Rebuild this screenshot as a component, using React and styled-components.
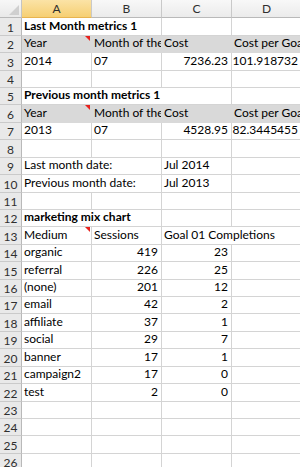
import React from "react";
import styled, { createGlobalStyle, css } from "styled-components";

const GlobalStyle = createGlobalStyle`
  html, body { margin: 0; padding: 0; background: #ffffff; overflow: hidden; }
  body { font-family: "Lato", "Liberation Sans", sans-serif; }
`;

const GRID = "#d4d4d4";
const FONT = `"Lato", "Liberation Sans", sans-serif`;

const bound = (n) => (n === 0 ? 18 : Math.round(18.3 + 17.42 * n));
const ROWS = 26;
const rowHeights = Array.from({ length: ROWS }, (_, i) => bound(i + 1) - bound(i));

const Sheet = styled.div`
  display: grid;
  grid-template-columns: 22px 70px 70px 70px 70px;
  grid-template-rows: 18px ${(p) => p.$rows};
  width: 302px;
  font-family: ${FONT};
  font-size: 12px;
  color: #000;
`;

const Corner = styled.div`
  box-sizing: border-box;
  position: relative;
  background: linear-gradient(#f7f7f7, #e9e9e9);
  border-right: 1px solid #c4c4c4;
  border-bottom: 1px solid #b9b9b9;
  overflow: hidden;
`;

const CornerMark = styled.svg`
  position: absolute;
  right: 2px;
  bottom: 2px;
`;

const ColHead = styled.div`
  box-sizing: border-box;
  display: flex;
  align-items: center;
  justify-content: center;
  font-size: 12px;
  color: #2f2f2f;
  border-right: 1px solid #c9c9c9;
  border-bottom: 1px solid #b9b9b9;
  background: ${(p) =>
    p.$active
      ? "linear-gradient(#fbe3a6, #f6cf73)"
      : "linear-gradient(#f8f8f8, #ebebeb)"};
  ${(p) => p.$active && css`border-bottom-color: #e8b44f;`}
`;

const RowHead = styled.div`
  box-sizing: border-box;
  display: flex;
  align-items: center;
  justify-content: center;
  font-size: 12px;
  color: #2f2f2f;
  background: #e9e9e9;
  border-right: 1px solid #b9b9b9;
  border-bottom: 1px solid #cacaca;
  padding-top: 1px;
`;

const Cell = styled.div`
  box-sizing: border-box;
  position: relative;
  display: flex;
  align-items: flex-end;
  justify-content: ${(p) => (p.$right ? "flex-end" : "flex-start")};
  grid-column: span ${(p) => p.$span || 1};
  padding: 0 3px 2px 2px;
  white-space: nowrap;
  overflow: hidden;
  font-weight: ${(p) => (p.$bold ? 700 : 400)};
  background: ${(p) => (p.$fill ? "#d9d9d9" : "#ffffff")};
  border-right: 1px solid ${(p) => (p.$fill ? "#d9d9d9" : GRID)};
  border-bottom: 1px solid ${(p) => (p.$fill ? "#d9d9d9" : GRID)};
`;

const Note = styled.span`
  position: absolute;
  top: 0;
  right: 1px;
  width: 0;
  height: 0;
  border-top: 5px solid #e8221e;
  border-left: 5px solid transparent;
`;

const C = (t, o = {}) => ({ t, ...o });
const E = () => ({ t: "" });

const data = [
  [C("Last Month metrics 1", { bold: true, span: 2 }), E(), E()],
  [
    C("Year", { fill: true, note: true }),
    C("Month of the year", { fill: true }),
    C("Cost", { fill: true }),
    C("Cost per Goal", { fill: true }),
  ],
  [C("2014"), C("07"), C("7236.23", { right: true }), C("101.918732", { right: true })],
  [E(), E(), E(), E()],
  [C("Previous month metrics 1", { bold: true, span: 3 }), E()],
  [
    C("Year", { fill: true, note: true }),
    C("Month of the year", { fill: true }),
    C("Cost", { fill: true }),
    C("Cost per Goal", { fill: true }),
  ],
  [C("2013"), C("07"), C("4528.95", { right: true }), C("82.3445455", { right: true })],
  [E(), E(), E(), E()],
  [C("Last month date:", { span: 2 }), C("Jul 2014"), E()],
  [C("Previous month date:", { span: 2 }), C("Jul 2013"), E()],
  [E(), E(), E(), E()],
  [C("marketing mix chart", { bold: true, span: 2 }), E(), E()],
  [C("Medium", { note: true }), C("Sessions"), C("Goal 01 Completions", { span: 2 })],
  ...[
    ["organic", 419, 23],
    ["referral", 226, 25],
    ["(none)", 201, 12],
    ["email", 42, 2],
    ["affiliate", 37, 1],
    ["social", 29, 7],
    ["banner", 17, 1],
    ["campaign2", 17, 0],
    ["test", 2, 0],
  ].map(([m, s, g]) => [C(m), C(String(s), { right: true }), C(String(g), { right: true }), E()]),
  [E(), E(), E(), E()],
  [E(), E(), E(), E()],
  [E(), E(), E(), E()],
  [E(), E(), E(), E()],
];

export default function App() {
  return (
    <>
      <GlobalStyle />
      <Sheet $rows={rowHeights.map((h) => `${h}px`).join(" ")}>
        <Corner>
          <CornerMark width="10" height="10" viewBox="0 0 10 10">
            <polygon points="10,0 10,10 0,10" fill="#cfcfcf" />
          </CornerMark>
        </Corner>
        {["A", "B", "C", "D"].map((l) => (
          <ColHead key={l} $active={l === "A"}>
            {l}
          </ColHead>
        ))}
        {data.map((row, i) => (
          <React.Fragment key={i}>
            <RowHead>{i + 1}</RowHead>
            {row.map((c, j) => (
              <Cell
                key={j}
                $span={c.span}
                $bold={c.bold}
                $fill={c.fill}
                $right={c.right}
              >
                {c.t}
                {c.note && <Note />}
              </Cell>
            ))}
          </React.Fragment>
        ))}
      </Sheet>
    </>
  );
}
